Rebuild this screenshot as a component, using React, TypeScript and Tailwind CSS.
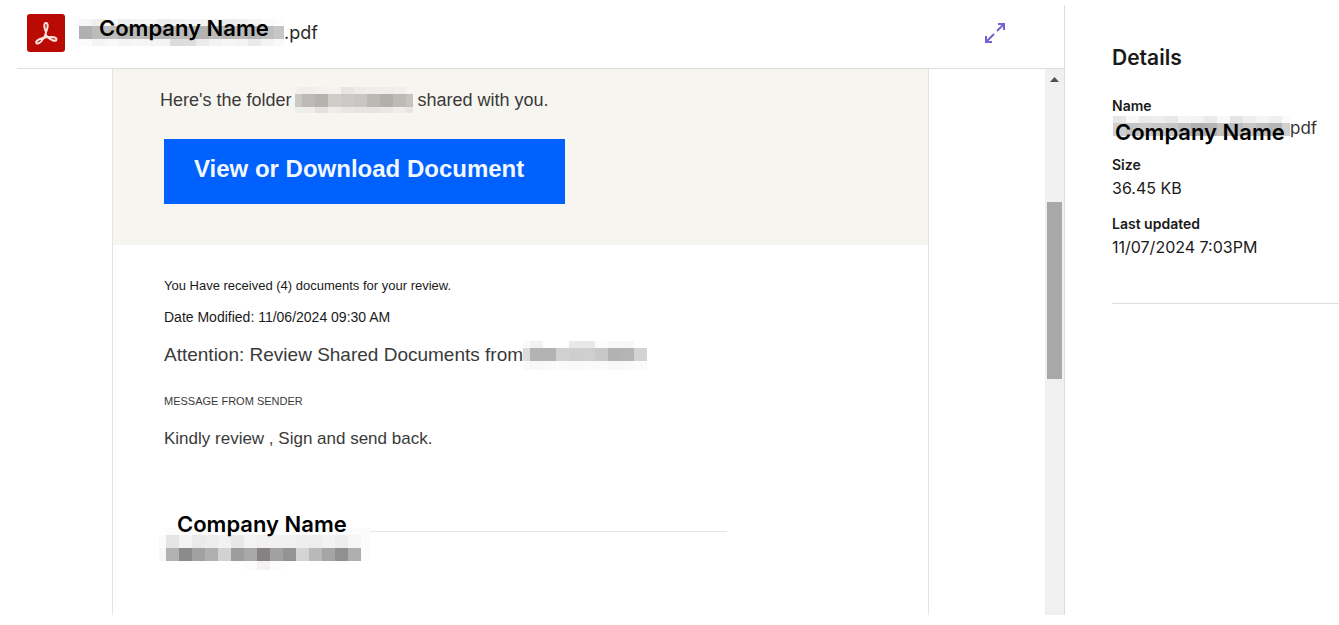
type Cell = [width: number, color: string]

type MosaicRow = {
  height: number
  cells: Cell[]
}

const row = (height: number, first: number, colors: string[], last = 13): MosaicRow => ({
  height,
  cells: colors.map((c, i) => [i === 0 ? first : i === colors.length - 1 ? last : 13, c]),
})

const headerMosaic: MosaicRow[] = [
  row(7, 13, ["#f6f6f6", "#efefef", "#fafafa", "#eeeeee", "#f3f3f3", "#f6f6f6", "#ededed", "#f1f1f1", "#f3f3f3", "#f3f3f3", "#f6f6f6", "#ececec", "#efefef", "#f3f3f3", "#fafafa", "#fdfdfd"], 10),
  row(13, 13, ["#b0b0b0", "#bcbcbc", "#bebebe", "#b6b6b6", "#bbbbbb", "#b8b8b8", "#b4b4b4", "#bababa", "#b8b8b8", "#b3b3b3", "#bbbbbb", "#b7b7b7", "#bababa", "#b6b6b6", "#bebebe", "#c6c6c6"], 10),
  row(7, 13, ["#fbfbfb", "#f4f4f4", "#f8f8f8", "#f4f4f4", "#f6f6f6", "#f4f4f4", "#f4f4f4", "#dcdcdc", "#dedede", "#ebebeb", "#f2f2f2", "#f6f6f6", "#f3f3f3", "#e9e9e9", "#f4f4f4", "#fafafa"], 10),
]

const detailsMosaic: MosaicRow[] = [
  row(7, 13, ["#e6e6e6", "#f8f8f8", "#ebebeb", "#eeeeee", "#e8e8e8", "#f6f6f6", "#f3f3f3", "#eaeaea", "#f8f8f8", "#e4e4e4", "#eeeeee", "#f5f5f5", "#efefef", "#fbfbfb"], 8),
  row(13, 13, ["#cfcfcf", "#c4c4c4", "#cccccc", "#c8c8c8", "#c6c6c6", "#bebebe", "#b0b0b0", "#b4b4b4", "#c2c2c2", "#bdbdbd", "#c6c6c6", "#bebebe", "#b6b6b6", "#d0d0d0"], 8),
]

const folderMosaic: MosaicRow[] = [
  row(7, 7, ["#f3f1ed", "#f0eeea", "#f3f1ed", "#f5f3ef", "#e7e5e1", "#eeece8", "#f0eeea", "#f0eeea", "#f1efeb", "#f6f4f0"], 7),
  row(13, 7, ["#cac8c4", "#bcbab6", "#b5b3ae", "#cfcdc9", "#cccac6", "#c9c7c3", "#bcb9b5", "#b3afab", "#bebbb7", "#c6c4c0"], 7),
  row(6, 7, ["#f0eeea", "#f0eeea", "#e4e2de", "#efede9", "#e9e7e3", "#e7e5e1", "#e6e4e0", "#eae8e4", "#f0eeea", "#e8e6e2"], 7),
]

const senderMosaic: MosaicRow[] = [
  row(7, 7, ["#f9f9f9", "#f2f2f2", "#ffffff", "#ffffff", "#e8e8e8", "#e8e8e8", "#fbfbfb", "#f8f8f8", "#f8f8f8", "#ffffff"]),
  row(13, 7, ["#dcdcdc", "#b3b3b3", "#b3b3b3", "#d1d1d1", "#cecece", "#cfcfcf", "#c8c8c8", "#b2b2b2", "#b4b4b4", "#d3d3d3"]),
  row(9, 7, ["#fafafa", "#f8f8f8", "#f9f9f9", "#fbfbfb", "#f9f9f9", "#fafafa", "#fafafa", "#f8f8f8", "#f9f9f9", "#fbfbfb"]),
]

const signatureMosaic: MosaicRow[] = [
  { height: 7, cells: [[7, "#ffffff"], [204, "#fbfbfb"]] },
  row(13, 7, ["#fafafa", "#e4e4e4", "#f3f3f3", "#eaeaea", "#ededed", "#f2f2f2", "#e8e8e8", "#f3f3f3", "#f1f1f1", "#f1f1f1", "#f0f0f0", "#eeeeee", "#ededed", "#f3f3f3", "#eeeeee", "#f6f6f6", "#fcfcfc"], 9),
  row(13, 7, ["#f7f7f7", "#b2b2b2", "#8b8b8b", "#a1a1a1", "#b0b0b0", "#d2d2d2", "#9d9d9d", "#a9a9a9", "#868283", "#a1a1a1", "#939393", "#d4d4d4", "#b9b9b9", "#a5a5a5", "#909090", "#aeaeae", "#fcfcfc"], 9),
  { height: 9, cells: [[85, "#ffffff"], [13, "#fcfcfc"], [13, "#f4f1f2"], [13, "#fcfcfc"]] },
]

const Mosaic = ({ rows }: { rows: MosaicRow[] }) => {
  const width = Math.max(...rows.map((r) => r.cells.reduce((sum, [w]) => sum + w, 0)))
  const height = rows.reduce((sum, r) => sum + r.height, 0)
  let y = 0

  return (
    <svg width={width} height={height} shapeRendering="crispEdges" aria-hidden="true" className="block shrink-0">
      {rows.map((r, i) => {
        const top = y
        y += r.height
        let x = 0
        return (
          <g key={i}>
            {r.cells.map(([w, color], j) => {
              const left = x
              x += w
              return <rect key={j} x={left} y={top} width={w} height={r.height} fill={color} />
            })}
          </g>
        )
      })}
    </svg>
  )
}

const CompanyName = () => (
  <span className="font-['Inter',sans-serif] text-[22px] leading-6 font-semibold whitespace-nowrap text-black">
    Company Name
  </span>
)

const PdfIcon = () => (
  <svg width="38" height="38" viewBox="0 0 38 38" fill="none" aria-hidden="true" className="shrink-0">
    <rect width="38" height="38" rx="3" fill="#b90a04" />
    <g stroke="#fbe3e0" strokeWidth="2" strokeLinejoin="round" strokeLinecap="round">
      <path d="M19 18C17 14 16.500 9 19 9C21.500 9 21 14 19 18L18.500 21" />
      <path d="M18.500 21C15.500 26.500 12 30 10 29.500C7.500 28.500 10.500 25 16 24" />
      <path d="M16 24C21 22.500 29.500 22.500 29.500 25.500C29 28.500 23 26 18.500 21" />
    </g>
  </svg>
)

const ExpandIcon = () => (
  <svg width="22" height="22" viewBox="0 0 22 22" fill="none" stroke="#7264d2" strokeWidth="2" aria-hidden="true">
    <path d="M14 2h6v6M20 2l-7 7M8 20H2v-6M2 20l8-8" />
  </svg>
)

const Header = () => (
  <header className="flex h-16 items-center border-b border-[#dedede] pr-[58px] pb-2 pl-[10px]">
    <PdfIcon />
    <div className="relative ml-[14px]">
      <Mosaic rows={headerMosaic} />
      <div className="absolute top-[-3px] left-5">
        <CompanyName />
      </div>
    </div>
    <span className="text-lg text-[#2a2a2a]">.pdf</span>
    <button type="button" aria-label="Expand" className="ml-auto">
      <ExpandIcon />
    </button>
  </header>
)

const DocumentPage = () => (
  <article className="min-w-0 flex-1 border-x border-[#e4e4e4] font-['Liberation_Sans',sans-serif] text-[#3a3a3a]">
    <section className="bg-[#f7f5f0] pt-[18px] pb-[41px]">
      <p className="flex h-[26px] items-center pl-[47px] text-lg whitespace-nowrap">
        Here's the folder
        <span className="mr-[5px] ml-[3px]">
          <Mosaic rows={folderMosaic} />
        </span>
        shared with you.
      </p>
      <button
        type="button"
        className="mt-[26px] ml-[51px] block h-[65px] w-[401px] bg-[#0061fe] pb-[6px] pl-[30px] text-left text-2xl font-bold text-[#f2f8ff]"
      >
        View or Download Document
      </button>
    </section>

    <section className="pt-[31px] pl-[51px]">
      <p className="text-[13px] leading-5 text-[#1a1a1a]">You Have received (4) documents for your review.</p>
      <p className="mt-[11px] text-sm leading-5 text-[#1a1a1a]">Date Modified: 11/06/2024 09:30 AM</p>
      <p className="mt-[14px] flex h-[29px] items-center text-[19px] whitespace-nowrap">
        Attention: Review Shared Documents from
        <Mosaic rows={senderMosaic} />
      </p>
      <p className="mt-[21px] text-[11px] leading-5">MESSAGE FROM SENDER</p>
      <p className="mt-[16px] text-[17px] leading-6">Kindly review , Sign and send back.</p>

      <div className="relative mt-[77px] -ml-[5px] flex">
        <Mosaic rows={signatureMosaic} />
        <div className="mt-[3px] h-px w-[357px] bg-[#e6e6e6]" />
        <div className="absolute -top-4 left-[18px]">
          <CompanyName />
        </div>
      </div>
    </section>
  </article>
)

const ScrollTrack = () => (
  <div className="flex w-[19px] shrink-0 flex-col items-center bg-[#f0f0f0] pt-2">
    <svg width="9" height="5" viewBox="0 0 9 5" aria-hidden="true">
      <path d="M4.500 0L9 5H0Z" fill="#505050" />
    </svg>
    <div className="mt-[120px] h-[177px] w-[15px] bg-[#a8a8a8]" />
  </div>
)

const Details = () => (
  <aside className="w-[274px] shrink-0 pt-[39px] pl-[47px] text-[#1a1a1a]">
    <h2 className="text-[21px] leading-7 font-semibold">Details</h2>
    <dl className="border-b border-[#dedede] pb-11 whitespace-nowrap">
      <dt className="mt-6 text-sm leading-5 font-semibold">Name</dt>
      <dd className="flex h-[29px] items-start text-base">
        <div className="relative ml-px">
          <Mosaic rows={detailsMosaic} />
          <div className="absolute top-1 left-[2px]">
            <CompanyName />
          </div>
        </div>
        <span className="text-[17px] text-[#333333]">pdf</span>
      </dd>
      <dt className="mt-[10px] text-sm leading-5 font-semibold">Size</dt>
      <dd className="mt-px text-base">36.45 KB</dd>
      <dt className="mt-[14px] text-sm leading-5 font-semibold">Last updated</dt>
      <dd className="mt-px text-base">11/07/2024 7:03PM</dd>
    </dl>
  </aside>
)

const App = () => {
  return (
    <div className="flex min-h-screen bg-white pt-[5px] pb-[10px] pl-[17px] font-['Inter',sans-serif]">
      <main className="flex min-w-0 flex-1 flex-col border-r border-[#dcdcdc]">
        <Header />
        <div className="flex flex-1">
          <div className="flex min-w-0 flex-1 pr-[116px] pl-[95px]">
            <DocumentPage />
          </div>
          <ScrollTrack />
        </div>
      </main>
      <Details />
    </div>
  )
}

export default App
